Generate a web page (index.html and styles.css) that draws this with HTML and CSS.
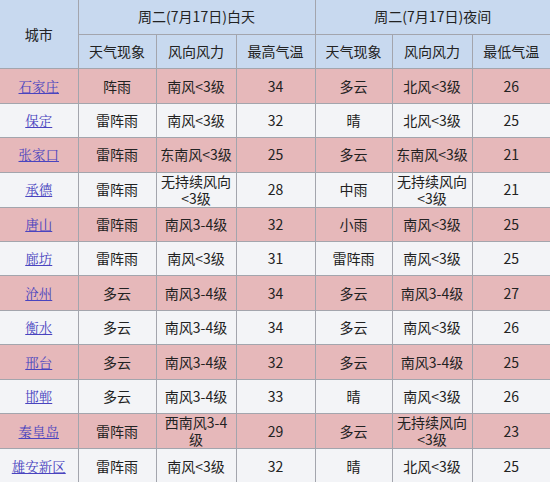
FILE: index.html
```html
<!DOCTYPE html>
<html lang="zh">
<head>
<meta charset="utf-8">
<link rel="stylesheet" href="styles.css">
</head>
<body>
<table class="wx">
  <colgroup>
    <col class="c78"><col class="c78"><col class="c80"><col class="c79"><col class="c77"><col class="c80"><col class="c78">
  </colgroup>
  <thead>
    <tr>
      <th rowspan="2">城市</th>
      <th colspan="3">周二(7月17日)白天</th>
      <th colspan="3">周二(7月17日)夜间</th>
    </tr>
    <tr>
      <th>天气现象</th><th>风向风力</th><th>最高气温</th>
      <th>天气现象</th><th>风向风力</th><th>最低气温</th>
    </tr>
  </thead>
  <tbody>
    <tr class="pink"><td><a href="#">石家庄</a></td><td>阵雨</td><td>南风&lt;3级</td><td>34</td><td>多云</td><td>北风&lt;3级</td><td>26</td></tr>
    <tr class="light"><td><a href="#">保定</a></td><td>雷阵雨</td><td>南风&lt;3级</td><td>32</td><td>晴</td><td>北风&lt;3级</td><td>25</td></tr>
    <tr class="pink"><td><a href="#">张家口</a></td><td>雷阵雨</td><td>东南风&lt;3级</td><td>25</td><td>多云</td><td>东南风&lt;3级</td><td>21</td></tr>
    <tr class="light"><td><a href="#">承德</a></td><td>雷阵雨</td><td>无持续风向&lt;3级</td><td>28</td><td>中雨</td><td>无持续风向&lt;3级</td><td>21</td></tr>
    <tr class="pink"><td><a href="#">唐山</a></td><td>雷阵雨</td><td>南风3-4级</td><td>32</td><td>小雨</td><td>南风&lt;3级</td><td>25</td></tr>
    <tr class="light"><td><a href="#">廊坊</a></td><td>雷阵雨</td><td>南风&lt;3级</td><td>31</td><td>雷阵雨</td><td>南风&lt;3级</td><td>25</td></tr>
    <tr class="pink"><td><a href="#">沧州</a></td><td>多云</td><td>南风3-4级</td><td>34</td><td>多云</td><td>南风3-4级</td><td>27</td></tr>
    <tr class="light"><td><a href="#">衡水</a></td><td>多云</td><td>南风3-4级</td><td>34</td><td>多云</td><td>南风&lt;3级</td><td>26</td></tr>
    <tr class="pink"><td><a href="#">邢台</a></td><td>多云</td><td>南风3-4级</td><td>32</td><td>多云</td><td>南风3-4级</td><td>25</td></tr>
    <tr class="light"><td><a href="#">邯郸</a></td><td>多云</td><td>南风3-4级</td><td>33</td><td>晴</td><td>南风&lt;3级</td><td>26</td></tr>
    <tr class="pink"><td><a href="#">秦皇岛</a></td><td>雷阵雨</td><td>西南风3-4级</td><td>29</td><td>多云</td><td>无持续风向&lt;3级</td><td>23</td></tr>
    <tr class="light"><td><a href="#">雄安新区</a></td><td>雷阵雨</td><td>南风&lt;3级</td><td>32</td><td>晴</td><td>北风&lt;3级</td><td>25</td></tr>
  </tbody>
</table>
</body>
</html>
```

FILE: styles.css
```css
html, body {
  margin: 0;
  padding: 0;
  background: #ffffff;
}
.wx {
  width: 550px;
  table-layout: fixed;
  border-collapse: collapse;
  border-style: hidden;
  font-family: "Noto Sans CJK SC", "Noto Sans", sans-serif;
  font-size: 14px;
  line-height: 17px;
  color: #222222;
}
.c78 { width: 78px; }
.c79 { width: 79px; }
.c80 { width: 80px; }
.c77 { width: 77px; }
.wx tr { height: 34.43px; }
.wx th, .wx td {
  border: 1px solid #a3a5ad;
  padding: 0 2px;
  text-align: center;
  vertical-align: middle;
  font-weight: normal;
}
.wx thead th { background: #c8d9ef; }
.wx tr.pink td { background: #e6b8ba; }
.wx tr.light td { background: #f3f4f7; }
.wx a {
  color: #4a44bf;
  text-decoration: underline;
  font-family: "Noto Serif CJK SC", "Noto Sans CJK SC", serif;
  font-size: 13.5px;
}
```
